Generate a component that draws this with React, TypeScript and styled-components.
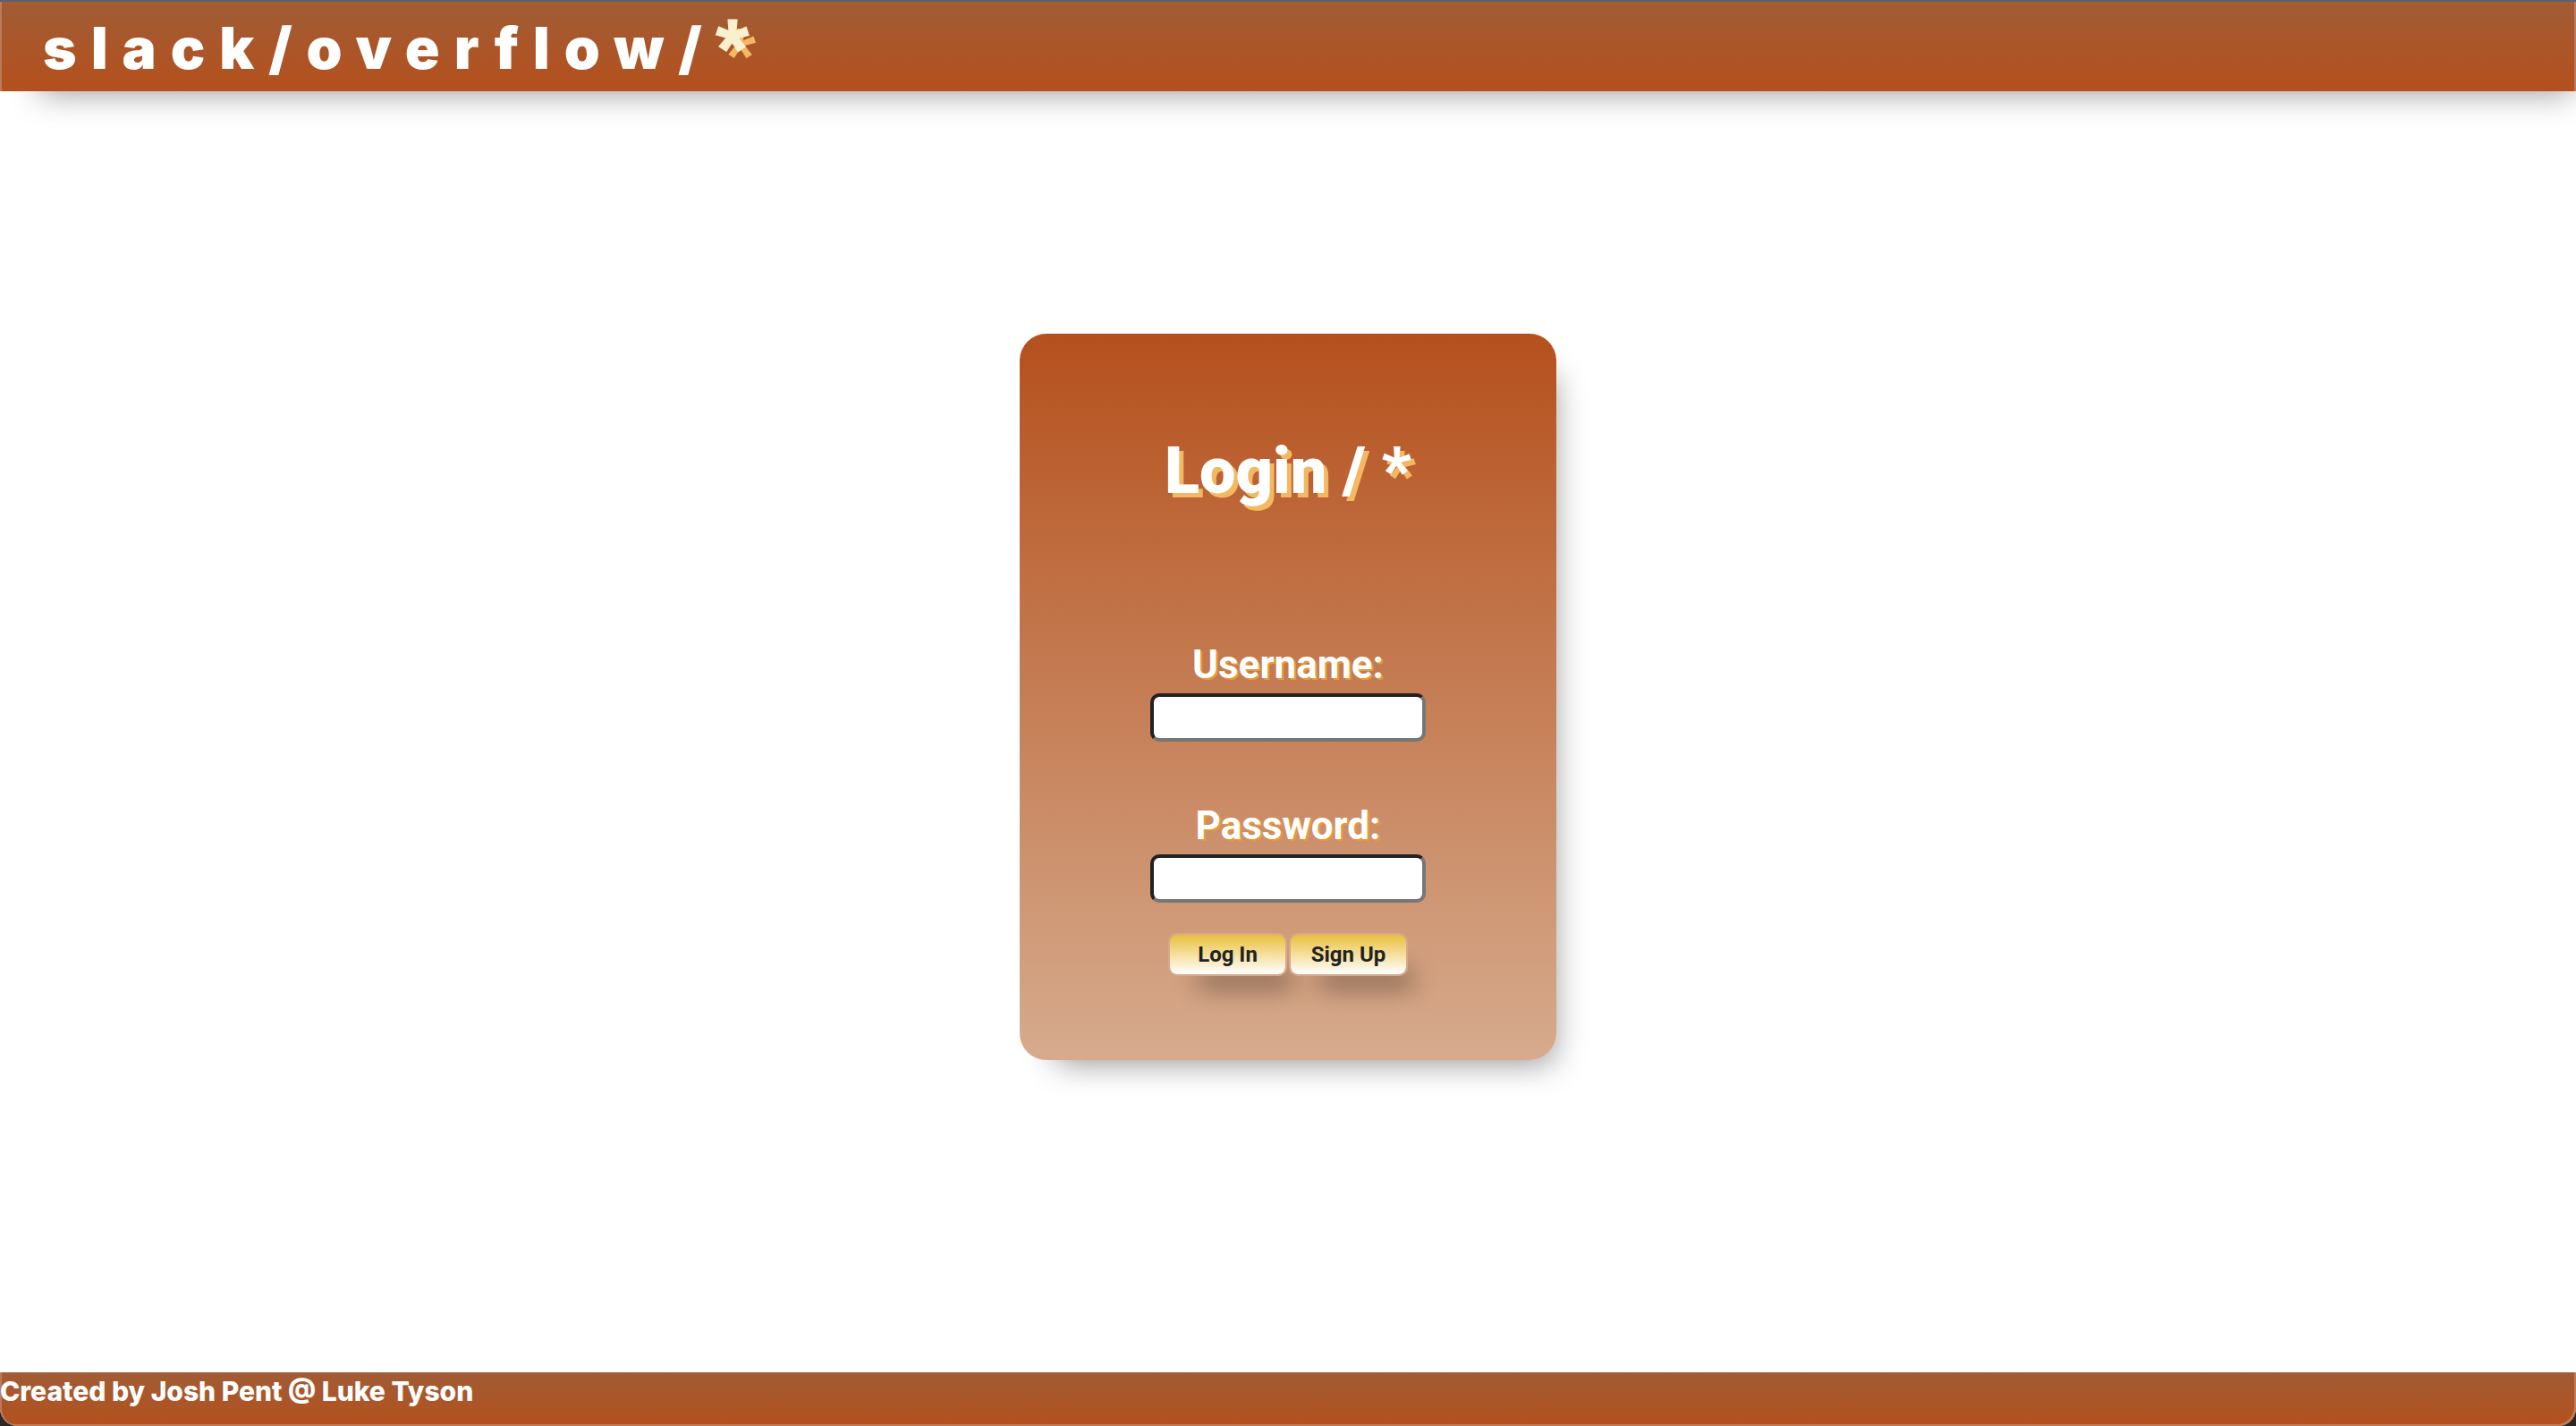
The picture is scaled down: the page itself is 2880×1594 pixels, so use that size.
import React from "react";
import styled, { createGlobalStyle } from "styled-components";

const display = `"Inter", "Open Sans", sans-serif`;
const body = `"Roboto", "Liberation Sans", sans-serif`;

const GlobalStyle = createGlobalStyle`
  *, *::before, *::after { box-sizing: border-box; }
  body { margin: 0; background: #2c2724; font-family: ${body}; }
`;

const Page = styled.div`
  min-height: 100vh;
  display: flex;
  flex-direction: column;
  overflow: hidden;
  background: #fff;
  border-radius: 0 0 20px 20px;
`;

const Header = styled.header`
  height: 102px;
  padding: 0 48px;
  display: flex;
  align-items: center;
  border-top: 2px solid #5d6066;
  background: linear-gradient(#a05c35, #b5501d);
  box-shadow:
    inset 2px 0 0 #bb7a5a,
    inset -2px 0 0 #bb7a5a,
    20px 26px 36px -24px rgba(0, 0, 0, 0.4);
`;

const Brand = styled.h1`
  margin: 0;
  color: #fff;
  font: 900 64px/80px ${display};
  letter-spacing: 16px;
  white-space: nowrap;
`;

const Star = styled.span`
  color: #f9f0d0;
  font: 900 76px/80px ${body};
  -webkit-text-stroke: 3px #f9f0d0;
  text-shadow: 9px 9px 0 #f4b860;
`;

const Main = styled.main`
  flex: 1;
  display: flex;
  align-items: center;
  justify-content: center;
  padding-bottom: 78px;
`;

const Card = styled.form`
  width: 600px;
  padding: 112px 40px 94px;
  display: flex;
  flex-direction: column;
  align-items: center;
  border-radius: 30px;
  background: linear-gradient(#b5501d, #d6ab8d);
  box-shadow: 18px 24px 36px -22px rgba(0, 0, 0, 0.45);
`;

const Title = styled.h2`
  margin: 0 0 148px;
  color: #fff;
  font: 900 72px/84px ${body};
  text-shadow: 5px 5px 0 #f4b860;
`;

const Field = styled.div`
  display: flex;
  flex-direction: column;
  align-items: center;
  margin-bottom: 68px;
  &:last-of-type { margin-bottom: 34px; }
`;

const Label = styled.label`
  margin-bottom: 6px;
  color: #fff;
  font: 700 44px/52px ${body};
  text-shadow: 2px 2px 0 #e89a30;
`;

const Input = styled.input`
  width: 308px;
  height: 54px;
  padding: 2px 8px;
  border: 4px solid;
  border-color: #222 #777 #777 #222;
  border-radius: 10px;
  background: #fff;
  font: 400 28px/40px ${body};
  outline: none;
`;

const Actions = styled.footer`
  display: flex;
  gap: 2px;
`;

const Button = styled.button`
  width: 133px;
  height: 48px;
  padding: 0;
  border: 2px solid #d8a98c;
  border-radius: 10px;
  background: linear-gradient(#eac03c, #fff) padding-box;
  box-shadow: 20px 28px 28px -14px rgba(0, 0, 0, 0.38);
  color: #222;
  font: 700 24px/28px ${body};
`;

const Footer = styled.footer`
  height: 60px;
  border-radius: 0 0 20px 20px;
  background: linear-gradient(#a05c35, #b5501d);
  box-shadow:
    inset 2px 0 0 #bb7a5a,
    inset -2px -2px 0 #c47a52;
`;

const Credit = styled.p`
  margin: 0;
  color: #fff;
  font: 800 30px/42px ${display};
`;

export default function App() {
  return (
    <>
      <GlobalStyle />
      <Page>
        <Header>
          <Brand>
            slack/overflow/<Star>*</Star>
          </Brand>
        </Header>
        <Main>
          <Card onSubmit={(e) => e.preventDefault()}>
            <Title>Login / *</Title>
            <Field>
              <Label htmlFor="username">Username:</Label>
              <Input id="username" type="text" />
            </Field>
            <Field>
              <Label htmlFor="password">Password:</Label>
              <Input id="password" type="password" />
            </Field>
            <Actions>
              <Button type="submit">Log In</Button>
              <Button type="button">Sign Up</Button>
            </Actions>
          </Card>
        </Main>
        <Footer>
          <Credit>Created by Josh Pent @ Luke Tyson</Credit>
        </Footer>
      </Page>
    </>
  );
}
